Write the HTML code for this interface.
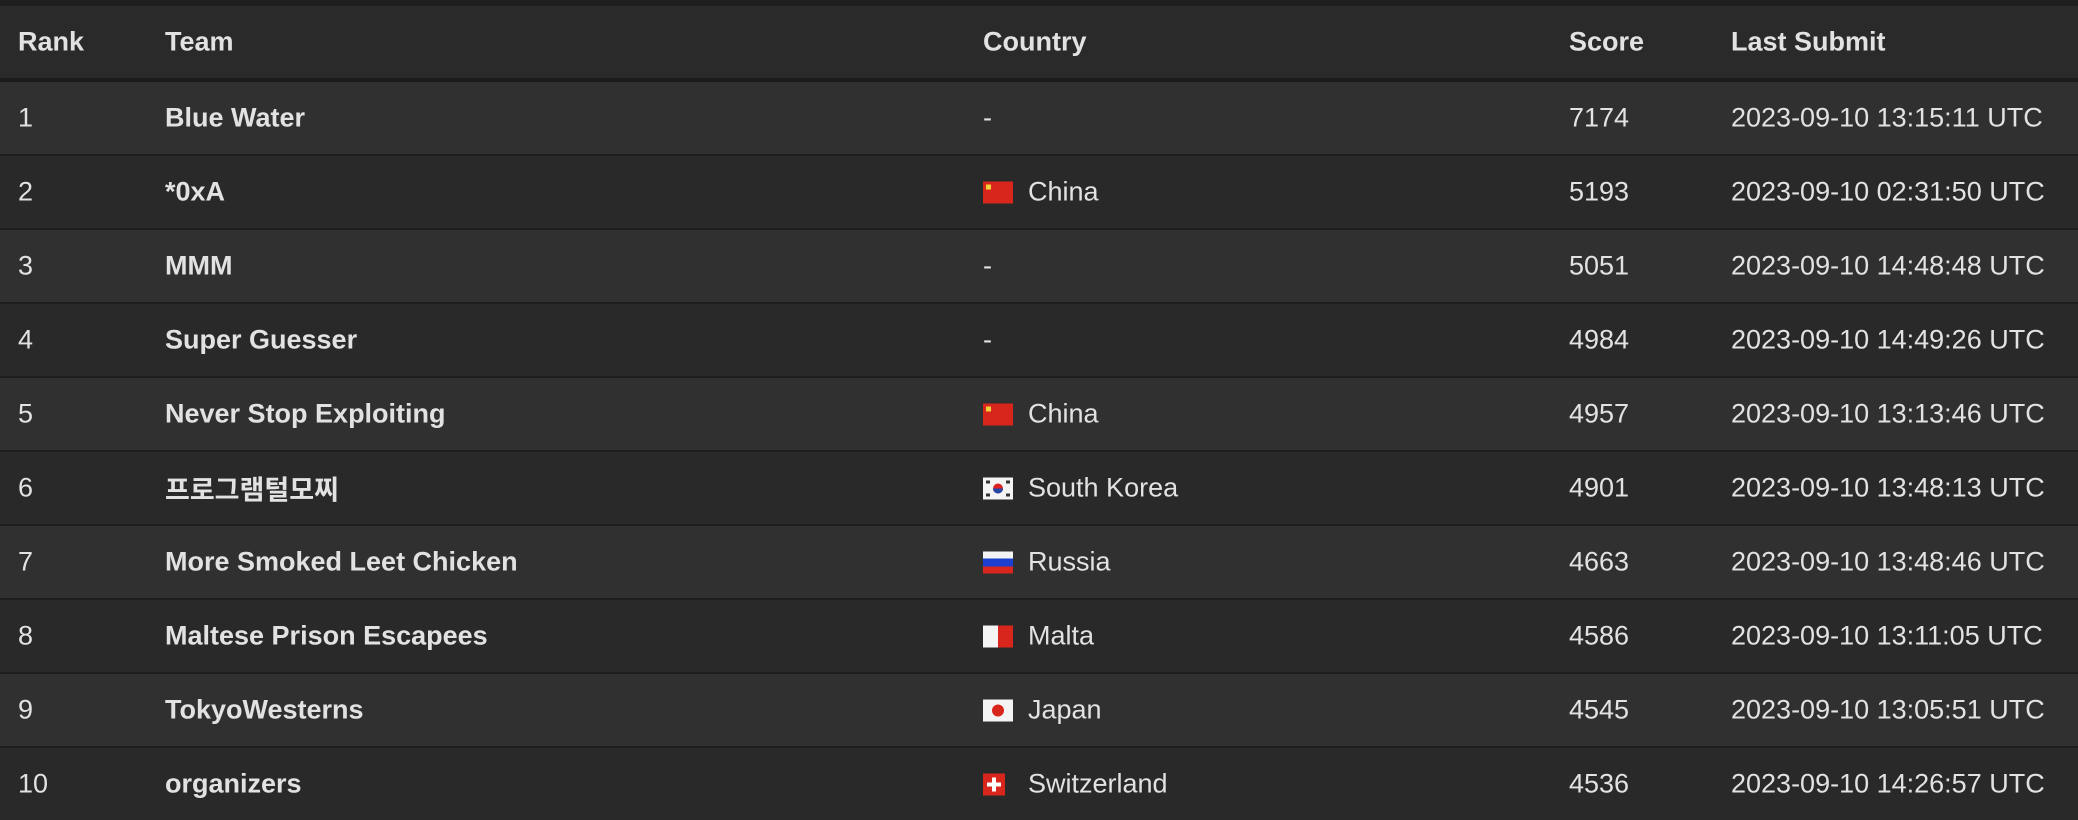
<!DOCTYPE html>
<html><head><meta charset="utf-8"><style>
*{margin:0;padding:0;box-sizing:border-box}
body{width:2078px;height:820px;background:#222;overflow:hidden;font-family:"Liberation Sans","Noto Sans CJK KR",sans-serif;color:#e2e2e2;font-size:27px}
.top{height:6px;background:#1f1f1f}
.row{position:relative;height:74px;border-bottom:2px solid #1e1e1e}
.hd{height:76px;background:#2a2a2a;border-bottom:4px solid #1b1b1b;font-weight:bold;font-size:27px}
.row span{position:absolute;top:50%;transform:translateY(-50%);white-space:nowrap}
.o{background:#303030}.e{background:#292929}
.c1{left:18px}.c2{left:165px;font-weight:bold}.c3{left:983px}.c4{left:1569px}.c5{left:1731px}
.c3 svg{vertical-align:-3px;margin-right:15px}
.last{border-bottom:none;height:72px}
</style></head><body>
<div class="top"></div>
<div class="row hd"><span class="c1">Rank</span><span class="c2">Team</span><span class="c3">Country</span><span class="c4">Score</span><span class="c5">Last Submit</span></div>
<div class="row o"><span class="c1">1</span><span class="c2">Blue Water</span><span class="c3">-</span><span class="c4">7174</span><span class="c5">2023-09-10 13:15:11 UTC</span></div>
<div class="row e"><span class="c1">2</span><span class="c2">*0xA</span><span class="c3"><svg width="30" height="22"><rect width="30" height="22" fill="#d8261c"/><rect x="3" y="3" width="5" height="5" fill="#f3d13a"/></svg>China</span><span class="c4">5193</span><span class="c5">2023-09-10 02:31:50 UTC</span></div>
<div class="row o"><span class="c1">3</span><span class="c2">MMM</span><span class="c3">-</span><span class="c4">5051</span><span class="c5">2023-09-10 14:48:48 UTC</span></div>
<div class="row e"><span class="c1">4</span><span class="c2">Super Guesser</span><span class="c3">-</span><span class="c4">4984</span><span class="c5">2023-09-10 14:49:26 UTC</span></div>
<div class="row o"><span class="c1">5</span><span class="c2">Never Stop Exploiting</span><span class="c3"><svg width="30" height="22"><rect width="30" height="22" fill="#d8261c"/><rect x="3" y="3" width="5" height="5" fill="#f3d13a"/></svg>China</span><span class="c4">4957</span><span class="c5">2023-09-10 13:13:46 UTC</span></div>
<div class="row e"><span class="c1">6</span><span class="c2">프로그램털모찌</span><span class="c3"><svg width="30" height="22"><rect width="30" height="22" fill="#f4f4f4"/><circle cx="15" cy="11" r="5" fill="#d22"/><path d="M10 11a5 5 0 0 0 10 0z" fill="#2447a8"/><rect x="3" y="3" width="4" height="3" fill="#333"/><rect x="23" y="16" width="4" height="3" fill="#333"/><rect x="23" y="3" width="4" height="3" fill="#333"/><rect x="3" y="16" width="4" height="3" fill="#333"/></svg>South Korea</span><span class="c4">4901</span><span class="c5">2023-09-10 13:48:13 UTC</span></div>
<div class="row o"><span class="c1">7</span><span class="c2">More Smoked Leet Chicken</span><span class="c3"><svg width="30" height="22"><rect width="30" height="8" fill="#f4f4f4"/><rect y="7" width="30" height="8" fill="#1c3fcf"/><rect y="15" width="30" height="7" fill="#d8261c"/></svg>Russia</span><span class="c4">4663</span><span class="c5">2023-09-10 13:48:46 UTC</span></div>
<div class="row e"><span class="c1">8</span><span class="c2">Maltese Prison Escapees</span><span class="c3"><svg width="30" height="22"><rect width="15" height="22" fill="#f4f4f4"/><rect x="15" width="15" height="22" fill="#d8261c"/></svg>Malta</span><span class="c4">4586</span><span class="c5">2023-09-10 13:11:05 UTC</span></div>
<div class="row o"><span class="c1">9</span><span class="c2">TokyoWesterns</span><span class="c3"><svg width="30" height="22"><rect width="30" height="22" fill="#f4f4f4"/><circle cx="15" cy="11" r="6" fill="#d8261c"/></svg>Japan</span><span class="c4">4545</span><span class="c5">2023-09-10 13:05:51 UTC</span></div>
<div class="row e last"><span class="c1">10</span><span class="c2">organizers</span><span class="c3"><svg width="22" height="22" style="margin-right:23px"><rect width="22" height="22" fill="#d8261c"/><rect x="9" y="4" width="4" height="14" fill="#fff"/><rect x="4" y="9" width="14" height="4" fill="#fff"/></svg>Switzerland</span><span class="c4">4536</span><span class="c5">2023-09-10 14:26:57 UTC</span></div>
</body></html>
